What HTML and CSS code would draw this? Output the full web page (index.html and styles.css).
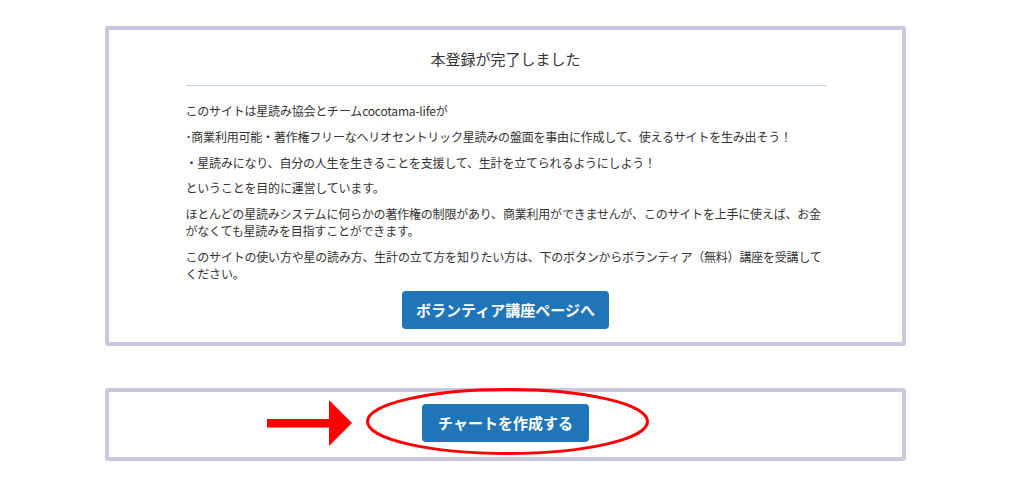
FILE: index.html
```html
<!DOCTYPE html>
<html lang="ja">
<head>
<meta charset="utf-8">
<title>本登録が完了しました</title>
<link rel="stylesheet" href="styles.css">
</head>
<body>
<main class="page">
  <section class="card card-main">
    <div class="content">
      <h1 class="title">本登録が完了しました</h1>
      <hr class="rule">
      <p>このサイトは星読み協会とチームcocotama-lifeが</p>
      <p>･商業利用可能・著作権フリーなヘリオセントリック星読みの盤面を事由に作成して、使えるサイトを生み出そう！</p>
      <p>・星読みになり、自分の人生を生きることを支援して、生計を立てられるようにしよう！</p>
      <p>ということを目的に運営しています。</p>
      <p>ほとんどの星読みシステムに何らかの著作権の制限があり、商業利用ができませんが、このサイトを上手に使えば、お金がなくても星読みを目指すことができます。</p>
      <p>このサイトの使い方や星の読み方、生計の立て方を知りたい方は、下のボタンからボランティア（無料）講座を受講してください。</p>
      <div class="actions">
        <a class="btn" href="#">ボランティア講座ページへ</a>
      </div>
    </div>
  </section>
  <section class="card card-chart">
    <div class="actions">
      <a class="btn btn-chart" href="#">チャートを作成する</a>
    </div>
    <svg class="annotation" width="400" height="76" viewBox="0 0 400 76" aria-hidden="true">
      <rect x="8" y="35" width="64" height="8.5" fill="#ff0000"/>
      <polygon points="70,16 93,39 70,62" fill="#ff0000"/>
      <ellipse cx="248.5" cy="37.5" rx="140" ry="32" fill="none" stroke="#ff0000" stroke-width="3"/>
    </svg>
  </section>
</main>
</body>
</html>
```
FILE: styles.css
```css
html, body {
  margin: 0;
  padding: 0;
  background: #ffffff;
}

body {
  font-family: "Noto Sans CJK JP", "Liberation Sans", sans-serif;
  color: #333333;
}

.page {
  width: 801px;
  margin-left: 105px;
  padding-top: 26px;
  display: flex;
  flex-direction: column;
  gap: 42px;
}

.card {
  border: 4px solid #cbc7e1;
  border-radius: 3px;
  background: #ffffff;
  box-sizing: border-box;
}

.card-main {
  padding: 18px 0 13px;
}

.content {
  width: 640px;
  margin: 0 auto;
}

.title {
  margin: 0;
  font-size: 15px;
  line-height: 21px;
  font-weight: normal;
  text-align: center;
  color: #333333;
}

.rule {
  border: 0;
  height: 1px;
  background: #c6d2e7;
  margin: 16px 0 16px;
}

.content p {
  margin: 0 0 8.75px;
  font-size: 12px;
  letter-spacing: -0.2px;
  line-height: 17px;
  color: #333333;
}

.actions {
  display: flex;
  justify-content: center;
}

.content .actions {
  margin-top: 8px;
}

.btn {
  display: block;
  height: 38px;
  line-height: 38px;
  padding: 0 14px;
  border-radius: 4px;
  background: #2075b9;
  color: #ffffff;
  font-size: 15px;
  font-weight: bold;
  text-decoration: none;
}

.btn-chart {
  padding: 0 16px;
}

.card-chart {
  position: relative;
  padding: 12px 0 15px;
}

.annotation {
  position: absolute;
  left: 150px;
  top: -8px;
  pointer-events: none;
}
```
